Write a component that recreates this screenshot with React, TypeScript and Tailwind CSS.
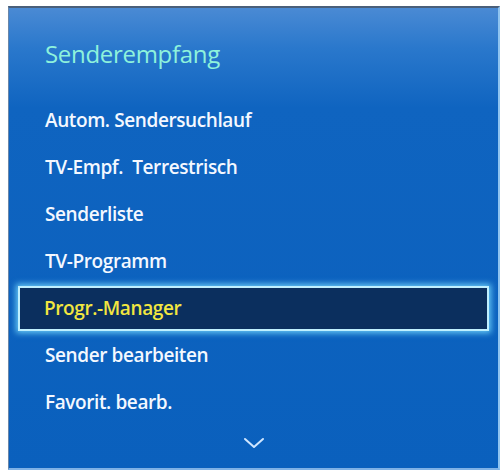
import React from "react";

const items = [
  "Autom. Sendersuchlauf",
  "TV-Empf.  Terrestrisch",
  "Senderliste",
  "TV-Programm",
  "Progr.-Manager",
  "Sender bearbeiten",
  "Favorit. bearb.",
];

export default function App() {
  return (
    <div className="w-[504px] h-[473px] bg-white pl-[8px] pt-[6px]" style={{ fontFamily: '"Open Sans", "Noto Sans", sans-serif' }}>
      <div className="w-[492px] h-[464px] flex flex-col border-t-2 border-t-[#4a5f7a] border-l border-l-[#6a86a8] border-r-2 border-r-[#8fc4f0] border-b-2 border-b-[#7fb2e6] bg-[linear-gradient(180deg,#4a8ad4_0px,#2a78cc_40px,#0f64c0_100px,#0a60bd_464px)]">
        <div className="h-[47px] mt-[22px] flex items-center pl-[36px] text-[24px] font-medium text-[#8ef2dc] tracking-[-0.3px]">
          Senderempfang
        </div>
        <div className="h-[20px]" />
        {items.map((t) => {
          const sel = t === "Progr.-Manager";
          return sel ? (
            <div key={t} className="h-[47px] flex items-center px-[9px]">
              <div className="w-full h-[45px] flex items-center pl-[24px] bg-[#0b2f5e] border-2 border-[#bff0ff] shadow-[0_0_6px_2px_rgba(120,220,255,0.85)] text-[19px] font-semibold text-[#f2e640] tracking-[-0.4px]">
                {t}
              </div>
            </div>
          ) : (
            <div key={t} className="h-[47px] flex items-center pl-[36px] text-[19px] font-semibold text-[#f4f8ff] tracking-[-0.4px] whitespace-pre">
              {t}
            </div>
          );
        })}
        <div className="flex justify-center mt-[11px]">
          <svg width="22" height="12" viewBox="0 0 22 12">
            <path d="M2 2 L11 10 L20 2" fill="none" stroke="#cfe6ff" strokeWidth="2" strokeLinecap="round" strokeLinejoin="round" />
          </svg>
        </div>
      </div>
    </div>
  );
}
